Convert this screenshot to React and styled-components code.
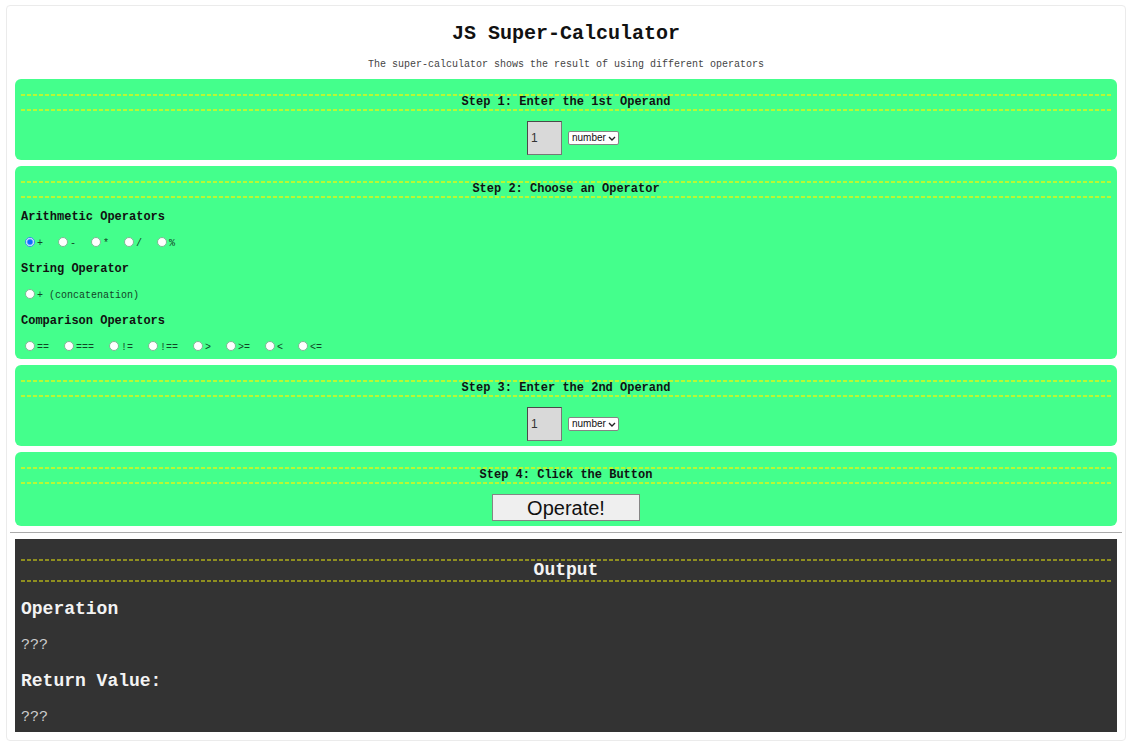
import React, { useState } from "react";
import styled, { createGlobalStyle } from "styled-components";

const mono = '"Courier New", "Liberation Mono", monospace';
const sans = 'Arial, "Liberation Sans", sans-serif';

const GlobalStyle = createGlobalStyle`
  *, *::before, *::after { box-sizing: border-box; }
  body { margin: 0; background: #fff; color: #111; font-family: ${mono}; }
`;

const Page = styled.main`
  margin: 5px 4px 0 6px;
  padding: 0 3px 8px;
  border: 1px solid #ebebeb;
  border-radius: 4px;
`;

const Header = styled.header`
  padding: 16px 0 8px;
  text-align: center;
`;

const Title = styled.h1`
  margin: 0 0 13px;
  font-size: 20px;
  line-height: 24px;
`;

const Subtitle = styled.p`
  margin: 0;
  font-size: 10px;
  line-height: 12px;
  color: #444;
`;

const Steps = styled.form`
  display: flex;
  flex-direction: column;
  gap: 6px;
  margin: 0 5px;
`;

const Step = styled.section`
  padding: 15px 6px 5px;
  border-radius: 6px;
  background: #44ff8c;
`;

const Heading = styled.h2`
  margin: 0 0 ${(p) => (p.$large ? 17 : 10)}px;
  font-size: ${(p) => (p.$large ? 18 : 12)}px;
  line-height: ${(p) => (p.$large ? 19 : 13)}px;
  text-align: center;

  &::before, &::after {
    content: "";
    display: block;
    height: 2px;
    background: repeating-linear-gradient(
      to right,
      ${(p) => (p.$large ? "#8f8f20" : "#b8f834")} 0 4px,
      transparent 4px 6px
    );
  }
`;

const OperandRow = styled.div`
  display: flex;
  justify-content: center;
  align-items: center;
  gap: 6px;
  padding-left: 14px;
`;

const OperandInput = styled.input`
  width: 35px;
  height: 34px;
  padding: 0 3px;
  border: 1px solid #777;
  border-top-color: #4a4a4a;
  border-left-color: #4a4a4a;
  border-radius: 0;
  background: #d9d9d9;
  color: #333;
  font: 12px ${sans};
`;

const SelectWrap = styled.span`
  display: grid;
  align-items: center;
  width: 51px;

  > * { grid-area: 1 / 1; }
  > svg { justify-self: end; margin-right: 3px; pointer-events: none; }
`;

const TypeSelect = styled.select`
  appearance: none;
  width: 100%;
  height: 14px;
  padding: 0 0 0 3px;
  border: 1px solid #858585;
  border-radius: 2px;
  background: #fff;
  color: #111;
  font: 10px/12px ${sans};
`;

const Groups = styled.div`
  display: flex;
  flex-direction: column;
  gap: 12px;
  padding-top: 2px;
`;

const Group = styled.fieldset`
  min-width: 0;
  margin: 0;
  padding: 0;
  border: 0;
`;

const GroupTitle = styled.legend`
  padding: 0;
  font-size: 12px;
  font-weight: bold;
  line-height: 14px;
`;

const Options = styled.div`
  display: flex;
  gap: 15px;
  padding: 13px 0 0 4px;
`;

const Option = styled.label`
  display: flex;
  align-items: flex-start;
  gap: 2px;
  font-size: 10px;
  line-height: 12px;
  color: #134527;

  > span { padding-top: 1px; white-space: pre; }
`;

const Radio = styled.input`
  appearance: none;
  width: 10px;
  height: 10px;
  margin: 0;
  border: 1px solid ${(p) => (p.checked ? "#3a8ff0" : "#7fb894")};
  border-radius: 50%;
  background: ${(p) => (p.checked ? "radial-gradient(circle, #0a6cff 0 2px, #fff 4px)" : "#fff")};
`;

const OperateButton = styled.button`
  display: block;
  width: 148px;
  height: 27px;
  margin: 0 auto;
  padding: 0;
  border: 1px solid #858585;
  border-radius: 0;
  background: #efefef;
  color: #111;
  font: 20px/24px ${sans};
`;

const Divider = styled.hr`
  margin: 6px 0;
  border: 0;
  border-top: 1px solid #aaa;
`;

const Output = styled.section`
  margin: 0 5px;
  padding: 20px 6px 6px;
  background: #333;
  color: #f3f3f3;
`;

const ResultTitle = styled.h3`
  margin: 0;
  font-size: 18px;
  line-height: 20px;
`;

const ResultText = styled.p`
  margin: 19px 0 17px;
  font-size: 15px;
  line-height: 16px;
  color: #ccc;

  &:last-child { margin-bottom: 0; }
`;

const operatorGroups = [
  { title: "Arithmetic Operators", options: ["+", "-", "*", "/", "%"] },
  { title: "String Operator", options: ["+ (concatenation)"] },
  { title: "Comparison Operators", options: ["==", "===", "!=", "!==", ">", ">=", "<", "<="] },
];

function Operand({ label }) {
  return (
    <OperandRow>
      <OperandInput type="text" defaultValue="1" aria-label={label} />
      <SelectWrap>
        <TypeSelect defaultValue="number" aria-label={`${label} type`}>
          <option>number</option>
          <option>string</option>
          <option>boolean</option>
        </TypeSelect>
        <svg width="8" height="5" viewBox="0 0 8 5" aria-hidden="true">
          <path d="M1 1l3 3L7 1" fill="none" stroke="#222" strokeWidth="1.4" />
        </svg>
      </SelectWrap>
    </OperandRow>
  );
}

export default function App() {
  const [operator, setOperator] = useState("+");
  return (
    <>
      <GlobalStyle />
      <Page>
        <Header>
          <Title>JS Super-Calculator</Title>
          <Subtitle>The super-calculator shows the result of using different operators</Subtitle>
        </Header>
        <Steps onSubmit={(e) => e.preventDefault()}>
          <Step>
            <Heading>Step 1: Enter the 1st Operand</Heading>
            <Operand label="First operand" />
          </Step>
          <Step>
            <Heading>Step 2: Choose an Operator</Heading>
            <Groups>
              {operatorGroups.map((group) => (
                <Group key={group.title}>
                  <GroupTitle>{group.title}</GroupTitle>
                  <Options>
                    {group.options.map((name) => (
                      <Option key={name}>
                        <Radio
                          type="radio"
                          name="operator"
                          checked={operator === name}
                          onChange={() => setOperator(name)}
                        />
                        <span>{name}</span>
                      </Option>
                    ))}
                  </Options>
                </Group>
              ))}
            </Groups>
          </Step>
          <Step>
            <Heading>Step 3: Enter the 2nd Operand</Heading>
            <Operand label="Second operand" />
          </Step>
          <Step>
            <Heading>Step 4: Click the Button</Heading>
            <OperateButton type="submit">Operate!</OperateButton>
          </Step>
        </Steps>
        <Divider />
        <Output>
          <Heading $large>Output</Heading>
          <ResultTitle>Operation</ResultTitle>
          <ResultText>???</ResultText>
          <ResultTitle>Return Value:</ResultTitle>
          <ResultText>???</ResultText>
        </Output>
      </Page>
    </>
  );
}
